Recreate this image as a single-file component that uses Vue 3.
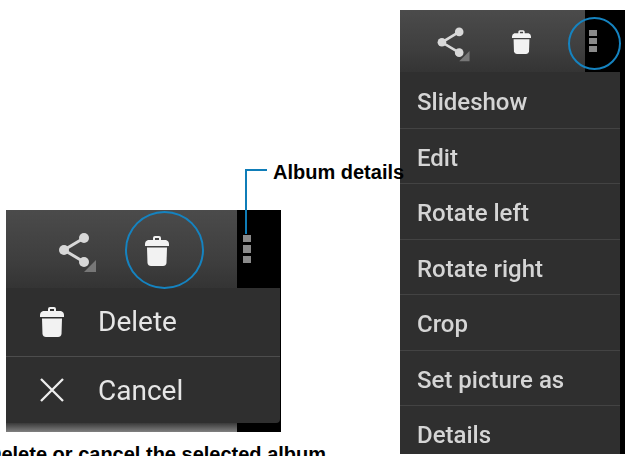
<template>
  <div class="page">
    <!-- left screenshot -->
    <section class="shot shot-left">
      <div class="bar">
        <div class="actions">
          <svg class="share" viewBox="0 0 44 44" width="44" height="44">
            <path d="M28 8 L8 20 L28 32" fill="none" stroke="#d8d8d8" stroke-width="3" />
            <circle cx="28" cy="8" r="5" fill="#d8d8d8" />
            <circle cx="8" cy="20" r="5" fill="#d8d8d8" />
            <circle cx="28" cy="32" r="5" fill="#d8d8d8" />
            <path d="M40 30 V42 H28 Z" fill="#777" />
          </svg>
          <svg class="trash" viewBox="0 0 24 32" width="24" height="32">
            <path :d="trashLid" fill="#f2f2f2" />
            <path :d="trashBody" fill="#f2f2f2" />
          </svg>
        </div>
        <div class="overflow">
          <i></i><i></i><i></i>
        </div>
      </div>
      <ul class="menu">
        <li>
          <svg viewBox="0 0 24 32" width="24" height="32">
            <path :d="trashLid" fill="#f2f2f2" />
            <path :d="trashBody" fill="#f2f2f2" />
          </svg>
          <span>Delete</span>
        </li>
        <li>
          <svg viewBox="0 0 24 24" width="24" height="24">
            <path d="M1 1 L23 23 M23 1 L1 23" stroke="#eee" stroke-width="2.3" fill="none" />
          </svg>
          <span>Cancel</span>
        </li>
      </ul>
      <div class="foot"><div class="foot-gray"></div></div>
    </section>

    <div class="ring ring-left"></div>

    <!-- right screenshot -->
    <section class="shot shot-right">
      <div class="bar">
        <div class="actions">
          <svg class="share" viewBox="0 0 44 44" width="38" height="38">
            <path d="M28 8 L8 20 L28 32" fill="none" stroke="#d8d8d8" stroke-width="3" />
            <circle cx="28" cy="8" r="5" fill="#d8d8d8" />
            <circle cx="8" cy="20" r="5" fill="#d8d8d8" />
            <circle cx="28" cy="32" r="5" fill="#d8d8d8" />
            <path d="M40 30 V42 H28 Z" fill="#777" />
          </svg>
          <svg class="trash" viewBox="0 0 24 32" width="19" height="26">
            <path :d="trashLid" fill="#f2f2f2" />
            <path :d="trashBody" fill="#f2f2f2" />
          </svg>
        </div>
        <div class="overflow">
          <i></i><i></i><i></i>
        </div>
      </div>
      <ul class="menu">
        <li v-for="item in items" :key="item">{{ item }}</li>
      </ul>
    </section>

    <div class="ring ring-right"></div>

    <!-- callout for the overflow button -->
    <div class="leader"></div>
    <div class="label label-album">Album details</div>
    <div class="label label-caption">Delete or cancel the selected album</div>
  </div>
</template>

<script setup>
const items = ['Slideshow', 'Edit', 'Rotate left', 'Rotate right', 'Crop', 'Set picture as', 'Details']

const trashLid = 'M8 3 Q8 1 10 1 H14 Q16 1 16 3 V5 H21 Q24 6 24 9 V11 H0 V9 Q0 6 3 5 H8 Z M10 3 V5 H14 V3 Z'
const trashBody = 'M2 12.5 H22 L21.5 28 Q21 31 18 31 H6 Q3 31 2.5 28 Z'
</script>

<style>
html,
body {
  background: #fff;
}
</style>

<style scoped>
.page {
  position: relative;
  width: 628px;
  height: 456px;
  overflow: hidden;
  background: #fff;
  font-family: "Liberation Sans", Arial, sans-serif;
}

.shot {
  position: absolute;
  display: flex;
  flex-direction: column;
  overflow: hidden;
  background: #000;
  font-family: Roboto, "Liberation Sans", sans-serif;
}

.shot-left {
  left: 6px;
  top: 210px;
  width: 275px;
  height: 222px;
  filter: blur(0.4px);
}

.shot-right {
  left: 400px;
  top: 10px;
  width: 225px;
  height: 444px;
  filter: blur(0.6px);
}

.bar {
  display: flex;
  flex: none;
}

.actions {
  flex: 1;
  display: flex;
  align-items: center;
  background: linear-gradient(#4b4b4b, #3e3e3e 65%, #343434);
}

.overflow {
  display: flex;
  flex-direction: column;
  align-items: flex-start;
  justify-content: center;
  box-sizing: border-box;
  background: #000;
}

.overflow i {
  display: block;
  background: #8a8a8a;
}

.menu {
  flex: none;
  list-style: none;
  margin: 0;
  padding: 0;
  background: #2f2f2f;
  color: #e6e6e6;
}

.menu li {
  display: flex;
  align-items: center;
  box-sizing: border-box;
}

/* left shot */
.shot-left .bar {
  height: 78px;
}

.shot-left .actions {
  padding-left: 50px;
  gap: 45px;
}

.shot-left .share {
  margin-top: 6px;
}

.shot-left .trash {
  margin-top: 3px;
}

.shot-left .overflow {
  width: 44px;
  gap: 3px;
  padding-left: 6px;
}

.shot-left .overflow i {
  width: 8px;
  height: 7.5px;
}

.shot-left .menu {
  width: 274px;
  border-radius: 0 0 4px 0;
}

.shot-left .menu li {
  height: 67.5px;
  padding-left: 33px;
  font-size: 28px;
}

.shot-left .menu li + li {
  padding-top: 1px;
  border-top: 1px solid #4d4d4d;
}

.shot-left .menu svg {
  width: 26px;
  margin-right: 33px;
}

.foot {
  flex: 1;
  display: flex;
  background: #000;
}

.foot-gray {
  width: 231px;
  background: linear-gradient(#3a3a3a, #808080);
}

/* right shot */
.shot-right .bar {
  height: 62px;
}

.shot-right .actions {
  padding-left: 35px;
  gap: 39px;
}

.shot-right .share {
  margin-top: 6px;
}

.shot-right .trash {
  margin-top: 2px;
}

.shot-right .overflow {
  width: 40px;
  gap: 2px;
  padding-left: 4px;
}

.shot-right .overflow i {
  width: 8px;
  height: 6px;
}

.shot-right .menu {
  width: 220px;
}

.shot-right .menu li {
  height: 55.5px;
  padding-top: 4px;
  padding-left: 17px;
  font-size: 24px;
  font-weight: 500;
  color: #d5d5d5;
}

.shot-right .menu li + li {
  border-top: 1px solid #434343;
}

.ring {
  position: absolute;
  box-sizing: border-box;
  border: 2px solid #1583c0;
  border-radius: 50%;
}

.ring-left {
  left: 125px;
  top: 211px;
  width: 79px;
  height: 78px;
}

.ring-right {
  left: 568px;
  top: 17px;
  width: 53px;
  height: 53px;
}

.leader {
  position: absolute;
  left: 245px;
  top: 169px;
  width: 22px;
  height: 65px;
  box-sizing: border-box;
  border-left: 2px solid #0f7db8;
  border-top: 2px solid #0f7db8;
}

.label {
  position: absolute;
  font-weight: 700;
  font-size: 20px;
  line-height: 20px;
  color: #000;
  white-space: nowrap;
}

.label-album {
  left: 273px;
  top: 162px;
}

.label-caption {
  left: -13px;
  top: 444px;
}
</style>
